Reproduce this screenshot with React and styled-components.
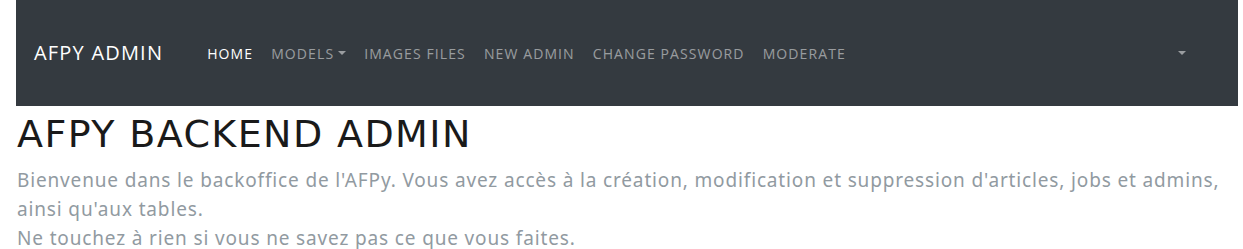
import React from 'react';
import styled, { createGlobalStyle } from 'styled-components';

const GlobalStyle = createGlobalStyle`
    body {
        margin: 0;
        background: #fff;
        font-family: "Noto Sans", sans-serif;
    }
`

const Page = styled.div`
    padding: 0 5px 0 16px;
`

const Navbar = styled.nav`
    height: 106px;
    background: #343a40;
    display: flex;
    align-items: center;
    padding: 0 18px;
`

const Brand = styled.a`
    font-family: "Open Sans", sans-serif;
    font-size: 20px;
    letter-spacing: 1.2px;
    color: #fff;
    text-transform: uppercase;
    margin-right: 44px;
    margin-top: -2px;
`

const NavList = styled.ul`
    list-style: none;
    margin: 0;
    padding: 0;
    display: flex;
    flex: 1;
    gap: 18px;
`

const NavLink = styled.li`
    font-family: "Open Sans", sans-serif;
    font-size: 14px;
    letter-spacing: 1.1px;
    text-transform: uppercase;
    color: ${props => props.active ? '#fff' : 'rgba(255,255,255,0.5)'};
    display: flex;
    align-items: center;
`

const Caret = styled.span`
    display: inline-block;
    width: 0;
    height: 0;
    margin-left: 4px;
    border-top: 4px solid currentColor;
    border-left: 4px solid transparent;
    border-right: 4px solid transparent;
`

const UserMenu = styled.div`
    color: rgba(255,255,255,0.5);
    margin-right: 34px;
    display: flex;
`

const Title = styled.h1`
    margin: 6px 0 0 1px;
    font-family: "DejaVu Sans", sans-serif;
    font-weight: 400;
    font-size: 38px;
    letter-spacing: 1.4px;
    text-transform: uppercase;
    color: #1a1a1a;
    line-height: 1.2;
`

const Lead = styled.p`
    margin: 8px 0 0 1px;
    font-family: "Noto Sans", sans-serif;
    font-size: 19px;
    letter-spacing: 0.85px;
    line-height: 29px;
    color: #919aa1;
`

const App = () => (
    <Page>
        <GlobalStyle />
        <Navbar>
            <Brand>AFPY Admin</Brand>
            <NavList>
                <NavLink active>Home</NavLink>
                <NavLink>Models<Caret /></NavLink>
                <NavLink>Images Files</NavLink>
                <NavLink>New Admin</NavLink>
                <NavLink>Change Password</NavLink>
                <NavLink>Moderate</NavLink>
            </NavList>
            <UserMenu><Caret /></UserMenu>
        </Navbar>
        <Title>AFPY Backend Admin</Title>
        <Lead>
            Bienvenue dans le backoffice de l'AFPy. Vous avez accès à la création, modification et suppression d'articles, jobs et admins, ainsi qu'aux tables.
            <br />
            Ne touchez à rien si vous ne savez pas ce que vous faites.
        </Lead>
    </Page>
)

export default App;
